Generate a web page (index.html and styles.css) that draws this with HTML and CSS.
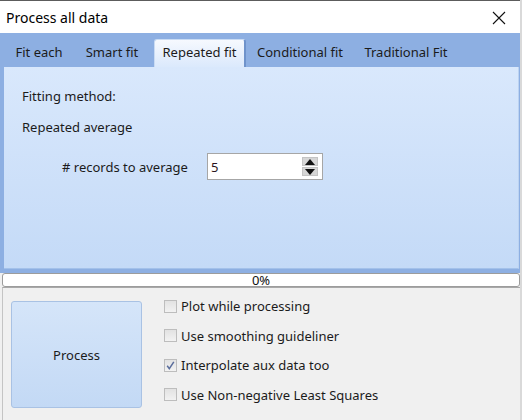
FILE: index.html
```html
<!DOCTYPE html>
<html>
<head>
<meta charset="utf-8">
<link rel="stylesheet" href="styles.css">
</head>
<body>
<div class="window">
  <div class="desk"></div>
  <div class="titlebar">
    <span class="title">Process all data</span>
    <span class="close"><svg width="14" height="14" viewBox="0 0 14 14"><path d="M1 1 L13 13 M13 1 L1 13" stroke="#111" stroke-width="1.1" fill="none"/></svg></span>
  </div>
  <div class="tabarea">
    <div class="tabs">
      <div class="tab t1">Fit each</div>
      <div class="tab t2">Smart fit</div>
      <div class="tab t3 selected">Repeated fit</div>
      <div class="tab t4">Conditional fit</div>
      <div class="tab t5">Traditional Fit</div>
    </div>
    <div class="panel">
      <div class="line">Fitting method:</div>
      <div class="line second">Repeated average</div>
      <div class="spinrow">
        <span class="spinlabel"># records to average</span>
        <div class="spinbox">
          <span class="spinval">5</span>
          <div class="spinbtns">
            <div class="spinbtn"><svg width="10" height="6" viewBox="0 0 10 6"><path d="M5 0 L10 6 L0 6 Z" fill="#111"/></svg></div>
            <div class="spinbtn"><svg width="10" height="6" viewBox="0 0 10 6"><path d="M0 0 L10 0 L5 6 Z" fill="#111"/></svg></div>
          </div>
        </div>
      </div>
    </div>
  </div>
  <div class="progress"><span class="pct">0%</span></div>
  <div class="bottom">
    <div class="procbtn">Process</div>
    <div class="checks">
      <div class="check"><span class="box"></span><span>Plot while processing</span></div>
      <div class="check"><span class="box"></span><span>Use smoothing guideliner</span></div>
      <div class="check"><span class="box"><svg width="11" height="11" viewBox="0 0 11 11"><path d="M2.2 5.8 L4.3 8.6 L8.8 1.8" stroke="#5a6d9c" stroke-width="1.5" fill="none"/></svg></span><span>Interpolate aux data too</span></div>
      <div class="check"><span class="box"></span><span>Use Non-negative Least Squares</span></div>
    </div>
  </div>
</div>
</body>
</html>
```
FILE: styles.css
```css
* { box-sizing: border-box; }
html, body { margin: 0; padding: 0; }
body {
  width: 522px;
  height: 420px;
  overflow: hidden;
  background: #f0f0f0;
  font-family: "Noto Sans", "Open Sans", sans-serif;
  font-size: 13px;
  color: #1b1b1b;
}
.window {
  width: 522px;
  height: 420px;
  display: flex;
  flex-direction: column;
  border-right: 2px solid #d9d9d9;
}
.desk {
  height: 1px;
  background: #5c5c5c;
}
.titlebar {
  height: 32px;
  background: #ffffff;
  display: flex;
  align-items: center;
  justify-content: space-between;
  padding: 0 14px 0 6px;
}
.title {
  font-size: 14px;
  color: #000;
}
.close {
  display: flex;
  margin-top: 1px;
}
.tabarea {
  background: #8dafe2;
  padding: 0 1px 4px 4px;
}
.tabs {
  height: 34px;
  display: flex;
  align-items: flex-end;
}
.tab {
  height: 28px;
  line-height: 26px;
  text-align: center;
  white-space: nowrap;
}
.t1 { width: 70px; }
.t2 { width: 76px; margin-right: 4px; }
.t3 { width: 92px; margin-right: 2px; }
.t4 { width: 104px; }
.t5 { width: 108px; }
.tab.selected {
  background: linear-gradient(#f6f9fe, #dbe9fc);
  border: 1px solid #c9dbf3;
  border-right: 2px solid #6f93cb;
  border-bottom: none;
  border-radius: 3px 3px 0 0;
  line-height: 25px;
}
.panel {
  height: 202px;
  background: linear-gradient(#d9e8fc, #c4daf7);
  border-bottom: 1px solid #a3c1ea;
  border-right: 1px solid #bcd3f2;
  padding: 21px 0 0 18px;
}
.line {
  height: 16px;
  line-height: 16px;
}
.line.second {
  margin-top: 15px;
}
.spinrow {
  display: flex;
  align-items: center;
  margin-top: 18px;
  padding-left: 40px;
}
.spinlabel {
  width: 145px;
}
.spinbox {
  width: 116px;
  height: 27px;
  background: #fff;
  border: 1px solid #a6a6a6;
  display: flex;
  align-items: center;
  justify-content: space-between;
  padding: 0 4px 0 3px;
}
.spinval {
  color: #2a1420;
}
.spinbtns {
  display: flex;
  flex-direction: column;
  gap: 1px;
}
.spinbtn {
  width: 16px;
  height: 9px;
  background: #d6d6d6;
  border: 1px solid #c4c4c4;
  display: flex;
  align-items: center;
  justify-content: center;
}
.progress {
  height: 14px;
  margin: 0 0 0 2px;
  background: #fff;
  border: 1px solid #9c9c9c;
  border-radius: 3px;
  text-align: center;
}
.pct {
  display: block;
  font-size: 13px;
  line-height: 12px;
  color: #111;
}
.bottom {
  flex: 1;
  margin-left: 2px;
  border-top: 1px solid #a8a8a8;
  border-left: 1px solid #c4c4c4;
  background: #f0f0f0;
  display: flex;
  align-items: flex-start;
  padding: 10px 0 0 8px;
}
.procbtn {
  width: 131px;
  height: 107px;
  margin-top: 3px;
  border: 1px solid #a9c2e4;
  border-radius: 3px;
  background: linear-gradient(#d5e5f9, #c3d9f5);
  display: flex;
  align-items: center;
  justify-content: center;
}
.checks {
  margin-left: 22px;
  display: flex;
  flex-direction: column;
  gap: 13.5px;
}
.check {
  height: 16px;
  display: flex;
  align-items: center;
  gap: 4px;
}
.box {
  width: 13px;
  height: 13px;
  border: 1px solid #bdbdbd;
  background: linear-gradient(#e2e2e2, #f2f2f2);
  display: flex;
  align-items: center;
  justify-content: center;
}
```
